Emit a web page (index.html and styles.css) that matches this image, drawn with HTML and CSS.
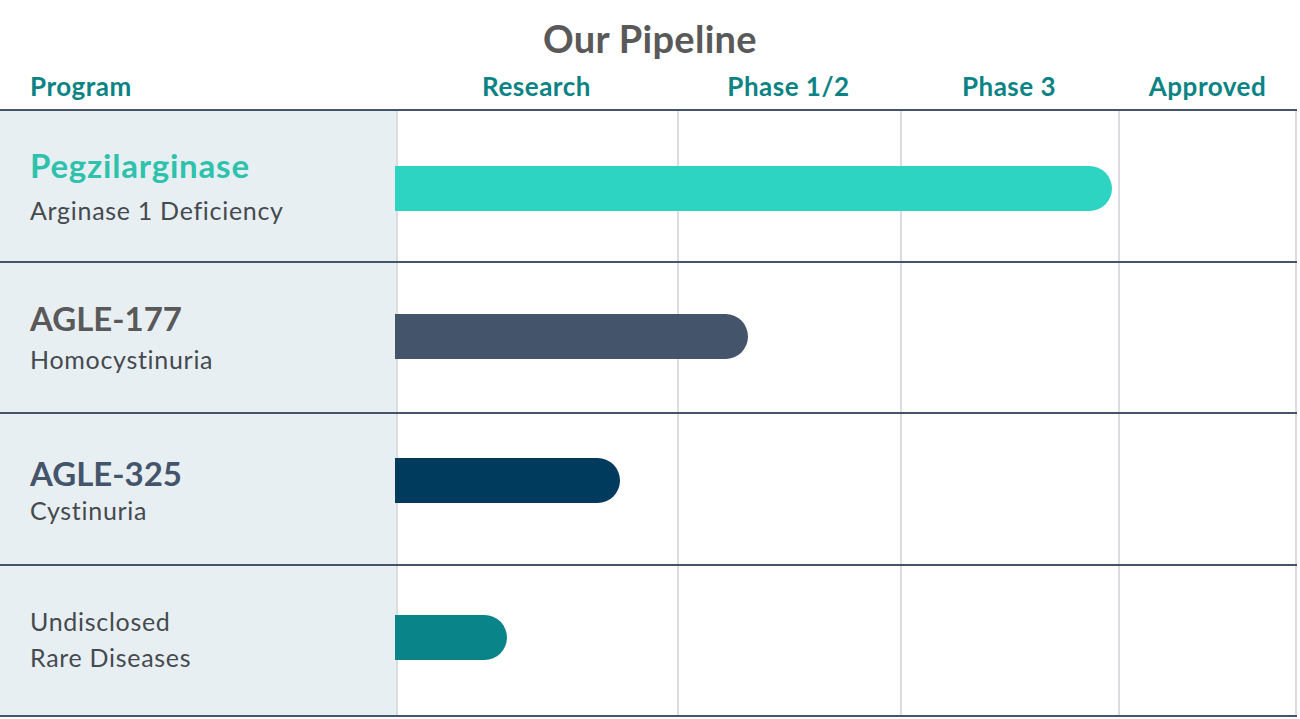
FILE: index.html
```html
<!DOCTYPE html>
<html lang="en">
<head>
<meta charset="utf-8">
<title>Our Pipeline</title>
<link rel="stylesheet" href="styles.css">
</head>
<body>
<div class="pipeline">
  <header class="head">
    <h1 class="title">Our Pipeline</h1>
    <div class="grid head-row">
      <div class="hcell hcell-program">Program</div>
      <div class="hcell">Research</div>
      <div class="hcell">Phase 1/2</div>
      <div class="hcell">Phase 3</div>
      <div class="hcell">Approved</div>
    </div>
  </header>

  <div class="grid row row-1">
    <div class="prog">
      <div class="name name-teal">Pegzilarginase</div>
      <div class="sub">Arginase 1 Deficiency</div>
    </div>
    <div class="cell c2"></div><div class="cell c3"></div><div class="cell c4"></div><div class="cell c5"></div>
    <div class="bar bar-teal" style="width:717px"></div>
  </div>

  <div class="grid row row-2">
    <div class="prog">
      <div class="name name-gray">AGLE-177</div>
      <div class="sub">Homocystinuria</div>
    </div>
    <div class="cell c2"></div><div class="cell c3"></div><div class="cell c4"></div><div class="cell c5"></div>
    <div class="bar bar-slate" style="width:353px"></div>
  </div>

  <div class="grid row row-3">
    <div class="prog">
      <div class="name name-slate">AGLE-325</div>
      <div class="sub">Cystinuria</div>
    </div>
    <div class="cell c2"></div><div class="cell c3"></div><div class="cell c4"></div><div class="cell c5"></div>
    <div class="bar bar-navy" style="width:225px"></div>
  </div>

  <div class="grid row row-4">
    <div class="prog">
      <div class="sub">Undisclosed</div>
      <div class="sub">Rare Diseases</div>
    </div>
    <div class="cell c2"></div><div class="cell c3"></div><div class="cell c4"></div><div class="cell c5"></div>
    <div class="bar bar-sea" style="width:112px"></div>
  </div>
</div>
</body>
</html>
```

FILE: styles.css
```css
* { box-sizing: border-box; }

html, body {
  margin: 0;
  padding: 0;
  background: #ffffff;
}

body {
  font-family: Lato, "Open Sans", "Liberation Sans", sans-serif;
  width: 1300px;
  height: 719px;
  overflow: hidden;
}

.pipeline {
  width: 1297px;
}

.head {
  padding-top: 16px;
  border-bottom: 2px solid #44546a;
}

.title {
  margin: 0;
  width: 1300px;
  text-align: center;
  font-size: 38px;
  line-height: 44px;
  font-weight: 700;
  letter-spacing: 0.3px;
  color: #595959;
}

.grid {
  display: grid;
  grid-template-columns: 396px 281px 223px 218px 179px;
}

.head-row {
  margin-top: 11px;
  padding-bottom: 8px;
}

.hcell {
  font-size: 26px;
  line-height: 30px;
  font-weight: 700;
  letter-spacing: 0.5px;
  color: #0b8385;
  text-align: center;
}

.hcell-program {
  text-align: left;
  padding-left: 30px;
}

.row {
  height: 151.5px;
  border-bottom: 2px solid #44546a;
}

.prog {
  grid-column: 1;
  grid-row: 1;
  background: #e8eff3;
  padding-left: 30px;
}

.cell {
  grid-row: 1;
  border-left: 2px solid #dadcdf;
}
.c2 { grid-column: 2; }
.c3 { grid-column: 3; }
.c4 { grid-column: 4; }
.c5 { grid-column: 5; border-right: 2px solid #dadcdf; }

.name {
  font-size: 33px;
  line-height: 38px;
  font-weight: 700;
}
.name-teal { color: #2ec2ad; letter-spacing: 0.8px; }
.name-gray { color: #595959; }
.name-slate { color: #44546a; }

.sub {
  font-size: 25px;
  line-height: 36px;
  letter-spacing: 0.7px;
  color: #454a4f;
}

.bar {
  grid-column: 2 / 6;
  grid-row: 1;
  align-self: start;
  justify-self: start;
  height: 45px;
  margin-left: -1px;
  border-radius: 0 23px 23px 0;
}
.bar-teal { background: #2dd4c2; }
.bar-slate { background: #44546a; }
.bar-navy { background: #003a5c; }
.bar-sea { background: #09858a; }

.row-1 .prog { padding-top: 35px; }
.row-1 .sub { margin-top: 8px; }
.row-1 .bar { margin-top: 55px; }

.row-2 .prog { padding-top: 36px; }
.row-2 .sub { margin-top: 4px; }
.row-2 .bar { margin-top: 51px; }

.row-3 .prog { padding-top: 40px; }
.row-3 .bar { margin-top: 44px; }

.row-4 .prog { padding-top: 37px; }
.row-4 .bar { margin-top: 49px; }
```
